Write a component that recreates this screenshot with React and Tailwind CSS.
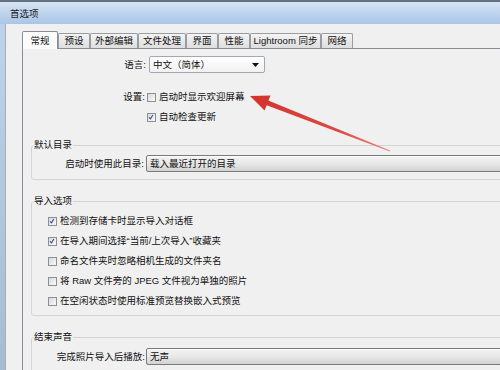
import React from 'react';

const tabs = [
  { label: '常规', w: 'w-[36px]', active: true },
  { label: '预设', w: 'w-[32px]' },
  { label: '外部编辑', w: 'w-[48px]' },
  { label: '文件处理', w: 'w-[48px]' },
  { label: '界面', w: 'w-[32px]' },
  { label: '性能', w: 'w-[32px]' },
  { label: 'Lightroom 同步', w: 'w-[71px]' },
  { label: '网络', w: 'w-[32px]' },
];

const importOptions = [
  { label: '检测到存储卡时显示导入对话框', checked: true },
  { label: '在导入期间选择“当前/上次导入”收藏夹', checked: true },
  { label: '命名文件夹时忽略相机生成的文件夹名', checked: false },
  { label: '将 Raw 文件旁的 JPEG 文件视为单独的照片', checked: false },
  { label: '在空闲状态时使用标准预览替换嵌入式预览', checked: false },
];

// Win7 style checkbox
const CheckBox = ({ checked }) => (
  <span className="relative flex w-[9px] h-[9px] shrink-0 border border-[#8e8f8f] bg-linear-to-br from-[#d6d9de] to-[#fafafa]">
    {checked && (
      <svg viewBox="0 0 9 9" className="absolute inset-0 w-[7px] h-[7px]">
        <path d="M1.2 4.2 L3.2 6.3 L6.2 1.2" fill="none" stroke="#3d4f93" strokeWidth="1.4" />
      </svg>
    )}
  </span>
);

// read-only combobox with the grey button look
const ComboButton = ({ value }) => (
  <div className="flex items-center h-[17px] w-[420px] pl-[3px] border border-[#7a7a7a] rounded-[2px] bg-linear-to-b from-[#f3f3f3] via-[#e8e8e8] to-[#d2d2d2] shadow-[inset_0_1px_0_#fdfdfd]">
    {value}
  </div>
);

const GroupBox = ({ title, className = '', children }) => (
  <fieldset className={`ml-[8px] w-[560px] border border-[#d5d5d5] rounded-[3px] pb-[7px] ${className}`}>
    <legend className="ml-[1px] px-[1px] leading-[12px]">{title}</legend>
    {children}
  </fieldset>
);

const App = () => {
  return (
    <div className="relative w-[500px] h-[370px] overflow-hidden bg-[#f0f0f0] text-[9.5px] leading-[12px] text-[#111] font-['Liberation_Sans','Noto_Sans_CJK_SC',sans-serif]">
      {/* Title bar */}
      <div className="h-[24px] flex items-center pl-[10px] pt-[2px] border-t-[2px] border-[#66727f] bg-linear-to-b from-[#d6e4f4] to-[#a9c5e6] text-[#1b1b1b]">
        首选项
      </div>

      <div className="flex h-[346px]">
        {/* left window frame */}
        <div className="w-[6px] shrink-0 bg-linear-to-b from-[#bdd3ec] to-[#a7bbd0] border-r border-[#9eafc2]"></div>

        <div className="flex-1">
          {/* Tabs */}
          <div className="flex items-end h-[17px] mt-[7px] pl-[16px]">
            {tabs.map((tab) =>
              tab.active ? (
                <div
                  key={tab.label}
                  className={`${tab.w} h-[18px] mb-[-1px] relative z-10 flex items-center justify-center bg-[#fcfcfc] border-t border-l border-r border-[#898c95] rounded-t-[2px]`}
                >
                  {tab.label}
                </div>
              ) : (
                <div
                  key={tab.label}
                  className={`${tab.w} h-[15px] flex items-center justify-center whitespace-nowrap bg-linear-to-b from-[#f4f4f4] to-[#dedede] border-t border-l border-r border-[#9a9ca3] rounded-t-[2px]`}
                >
                  {tab.label}
                </div>
              )
            )}
          </div>

          {/* Tab panel */}
          <div className="ml-[16px] w-[600px] border-l border-t border-[#898c95] pb-[20px]">
            <div className="flex items-center h-[17px] mt-[7px]">
              <span className="w-[123px] text-right">语言:</span>
              <div className="ml-[3px] w-[116px] h-[17px] flex items-center justify-between pl-[3px] pr-[5px] border border-[#a3a8b0] rounded-[2px] bg-linear-to-b from-[#ffffff] to-[#f1f1f1]">
                <span>中文（简体）</span>
                <svg viewBox="0 0 7 4" className="w-[7px] h-[4px]">
                  <path d="M0 0 H7 L3.5 4 Z" fill="#111" />
                </svg>
              </div>
            </div>

            <div className="flex items-center h-[14px] mt-[17px]">
              <span className="w-[122px] text-right">设置:</span>
              <span className="ml-[2px]"><CheckBox checked={false} /></span>
              <span className="ml-[3px]">启动时显示欢迎屏幕</span>
            </div>

            <div className="flex items-center h-[14px] mt-[6px] pl-[124px]">
              <CheckBox checked />
              <span className="ml-[3px]">自动检查更新</span>
            </div>

            <GroupBox title="默认目录" className="mt-[15px]">
              <div className="flex items-center h-[17px] mt-[4px]">
                <span className="w-[112px] text-right">启动时使用此目录:</span>
                <div className="ml-[2px]"><ComboButton value="载入最近打开的目录" /></div>
              </div>
            </GroupBox>

            <GroupBox title="导入选项" className="mt-[15px]">
              <div className="flex flex-col gap-[6px] mt-[7px]">
                {importOptions.map((opt) => (
                  <div key={opt.label} className="flex items-center h-[14px] pl-[16px]">
                    <CheckBox checked={opt.checked} />
                    <span className="ml-[3px] whitespace-nowrap">{opt.label}</span>
                  </div>
                ))}
              </div>
            </GroupBox>

            <GroupBox title="结束声音" className="mt-[15px]">
              <div className="flex items-center h-[17px] mt-[5px]">
                <span className="w-[113px] text-right">完成照片导入后播放:</span>
                <div className="ml-[1px]"><ComboButton value="无声" /></div>
              </div>
            </GroupBox>
          </div>
        </div>
      </div>

      {/* red annotation arrow */}
      <svg className="absolute inset-0 w-[500px] h-[370px] pointer-events-none" viewBox="0 0 500 370">
        <defs>
          <linearGradient id="shaft" x1="390" y1="151" x2="262" y2="101" gradientUnits="userSpaceOnUse">
            <stop offset="0" stopColor="#e98a84" />
            <stop offset="0.4" stopColor="#dc4a42" />
            <stop offset="1" stopColor="#d3362f" />
          </linearGradient>
        </defs>
        <polygon points="390.2,150.6 389.8,151.4 264.0,104.2 265.8,99.6" fill="url(#shaft)" />
        <polygon points="250,96 270.5,95.6 264.6,110.6" fill="#d3362f" />
      </svg>
    </div>
  );
};

export default App;
